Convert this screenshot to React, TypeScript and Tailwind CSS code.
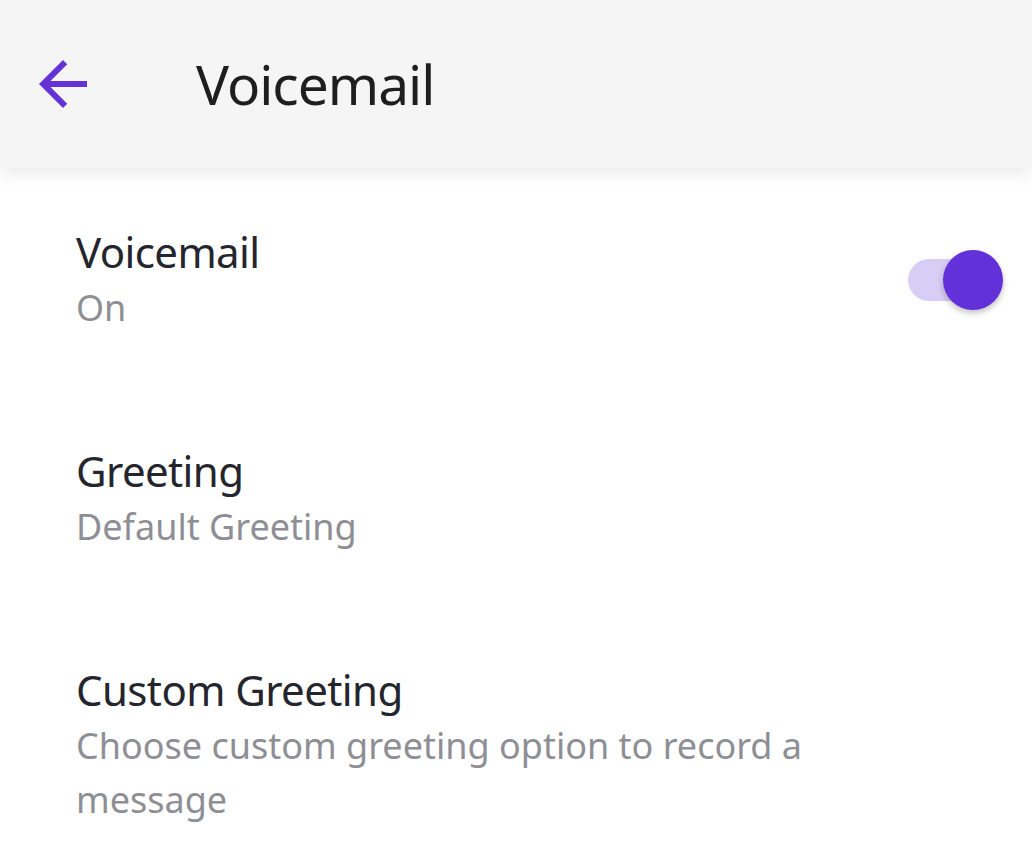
import { useState } from 'react';

const font = { fontFamily: '"Noto Sans", "Open Sans", sans-serif' };

function BackArrow() {
  return (
    <svg width="72" height="72" viewBox="0 0 24 24" className="shrink-0">
      <path
        fill="#6532d6"
        d="M20 11H7.83l5.59-5.59L12 4l-8 8 8 8 1.41-1.41L7.83 13H20v-2z"
      />
    </svg>
  );
}

function Toggle({ on, onChange }: { on: boolean; onChange: () => void }) {
  return (
    <button
      type="button"
      onClick={onChange}
      className="relative flex h-[60px] w-[96px] shrink-0 items-center"
      aria-pressed={on}
    >
      <span
        className={
          'ml-[1px] h-[42px] w-[80px] rounded-full ' + (on ? 'bg-[#d8cdf4]' : 'bg-[#cfcfd3]')
        }
      />
      <span
        className={
          'absolute top-0 h-[60px] w-[60px] rounded-full shadow-[0_3px_6px_rgba(0,0,0,0.25)] ' +
          (on ? 'right-0 bg-[#6430da]' : 'left-0 bg-[#f4f4f4]')
        }
      />
    </button>
  );
}

function SettingRow({
  title,
  subtitle,
  children,
}: {
  title: string;
  subtitle: string;
  children?: React.ReactNode;
}) {
  return (
    <div className="flex items-center justify-between pl-[76px] pr-[29px]">
      <div className="w-[770px]">
        <div className="text-[42px] leading-[54px] tracking-[-0.6px] text-[#25252d]">{title}</div>
        <div className="mt-[2px] text-[36px] leading-[54px] text-[#8e8e95]">{subtitle}</div>
      </div>
      {children}
    </div>
  );
}

export default function App() {
  const [voicemailOn, setVoicemailOn] = useState(true);

  return (
    <div className="min-h-[854px] bg-white" style={font}>
      <header className="relative z-10 flex h-[168px] items-center bg-[#f5f5f5] pl-[27px] shadow-[0_4px_18px_rgba(0,0,0,0.10)]">
        <BackArrow />
        <h1 className="ml-[97px] text-[55px] font-normal tracking-[-1px] text-[#1e1e1e]">Voicemail</h1>
      </header>

      <div className="flex flex-col gap-[109px] pt-[57px]">
        <SettingRow title="Voicemail" subtitle={voicemailOn ? 'On' : 'Off'}>
          <Toggle on={voicemailOn} onChange={() => setVoicemailOn((v) => !v)} />
        </SettingRow>
        <SettingRow title="Greeting" subtitle="Default Greeting" />
        <SettingRow
          title="Custom Greeting"
          subtitle="Choose custom greeting option to record a message"
        />
      </div>
    </div>
  );
}
